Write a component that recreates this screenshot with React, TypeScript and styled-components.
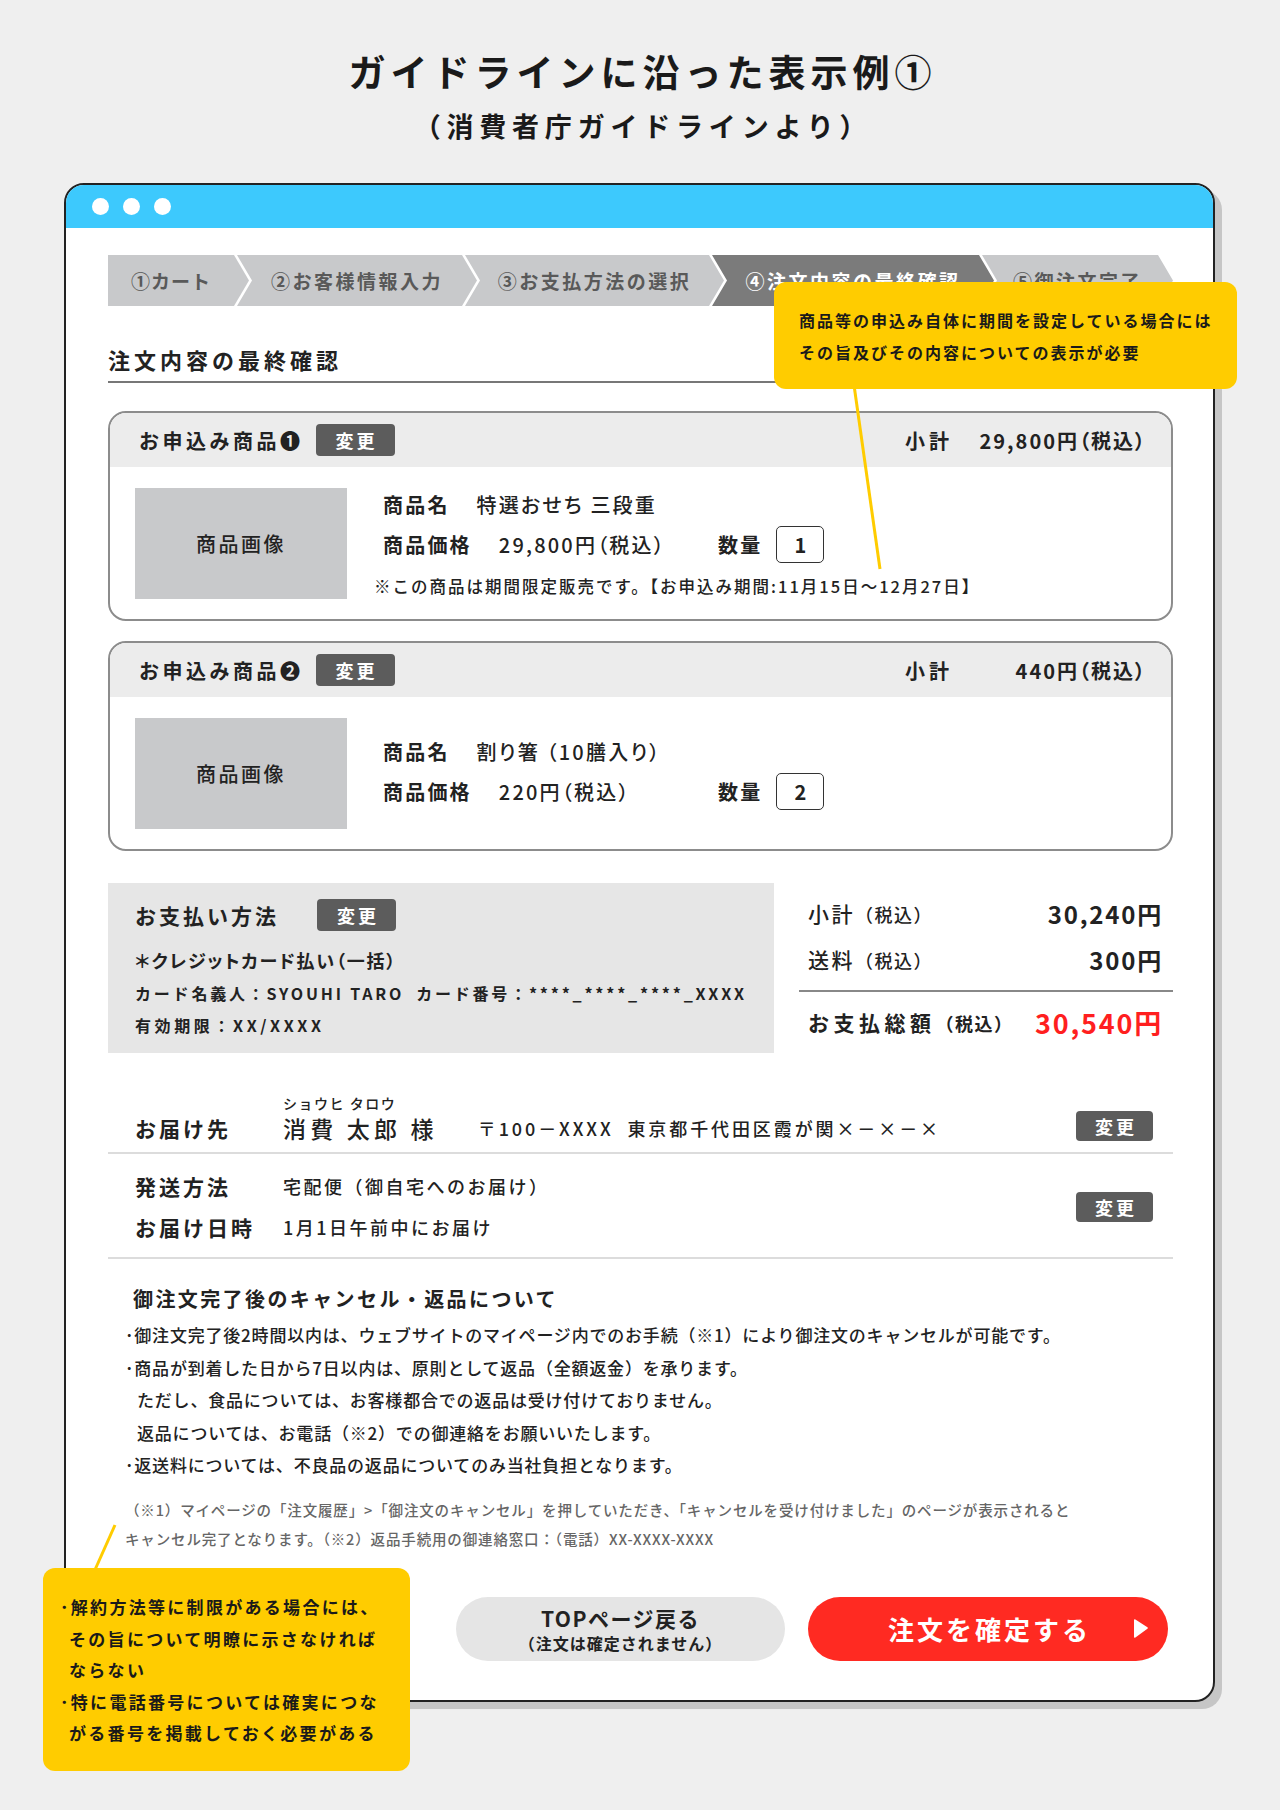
import styled, { createGlobalStyle } from "styled-components";

const GlobalStyle = createGlobalStyle`
  * {
    box-sizing: border-box;
  }
  body {
    margin: 0;
    background: #efefef;
    font-family: "Noto Sans CJK JP", "Noto Sans", sans-serif;
    color: #222;
  }
`;

const Page = styled.div`
  position: relative;
  width: 1280px;
  min-height: 1810px;
  padding-top: 46px;
`;

const Title = styled.h1`
  margin: 0;
  padding-left: 5px;
  text-align: center;
  font-size: 37px;
  line-height: 50px;
  font-weight: 700;
  letter-spacing: 5px;
  color: #1a1a1a;
`;

const SubTitle = styled.h2`
  margin: 10px 0 0;
  padding-left: 6px;
  text-align: center;
  font-size: 27px;
  line-height: 40px;
  font-weight: 700;
  letter-spacing: 5.8px;
  color: #1a1a1a;
`;

const Window = styled.div`
  margin: 37px 0 0 64px;
  width: 1151px;
  background: #fff;
  border: 2px solid #222;
  border-radius: 20px;
  box-shadow: 7px 7px 0 #c6c6c6;
`;

const TitleBar = styled.div`
  display: flex;
  align-items: center;
  gap: 14px;
  height: 43px;
  padding-left: 26px;
  background: #3dc9fd;
  border-radius: 18px 18px 0 0;
`;

const Dot = styled.span`
  width: 17px;
  height: 17px;
  border-radius: 50%;
  background: #fff;
`;

const WindowBody = styled.div`
  padding: 27px 40px 39px 42px;
`;

const Steps = styled.div`
  display: flex;
  height: 51px;
`;

const Step = styled.div<{ $active?: boolean; $first?: boolean; $w?: number }>`
  display: flex;
  align-items: center;
  justify-content: center;
  height: 100%;
  flex: ${(p) => (p.$w ? `0 0 ${p.$w}px` : "1 1 auto")};
  margin-left: ${(p) => (p.$first ? "0" : "-12px")};
  padding: 0 15px 0 ${(p) => (p.$first ? "0" : "15px")};
  background: ${(p) => (p.$active ? "#7b7b7b" : "#c8c9cb")};
  color: ${(p) => (p.$active ? "#fff" : "#595959")};
  font-size: 19px;
  font-weight: 700;
  letter-spacing: ${(p) => (p.$first ? "1px" : "2.5px")};
  white-space: nowrap;
  clip-path: ${(p) =>
    p.$first
      ? "polygon(0 0, calc(100% - 15px) 0, 100% 50%, calc(100% - 15px) 100%, 0 100%)"
      : "polygon(0 0, calc(100% - 15px) 0, 100% 50%, calc(100% - 15px) 100%, 0 100%, 15px 50%)"};
`;

const PageHeading = styled.h3`
  margin: 38px 0 0;
  padding-bottom: 7px;
  border-bottom: 2px solid #777;
  font-size: 22px;
  line-height: 30px;
  font-weight: 700;
  letter-spacing: 4px;
`;

const Card = styled.section`
  margin-top: 28px;
  border: 2px solid #8c8c8c;
  border-radius: 18px;
  overflow: hidden;

  & + & {
    margin-top: 20px;
  }
`;

const CardHeader = styled.div`
  display: flex;
  align-items: center;
  height: 54px;
  padding: 0 24px 0 29px;
  background: #ececec;
`;

const ItemTitle = styled.span`
  font-size: 20px;
  font-weight: 700;
  letter-spacing: 3.5px;
  margin-right: 12px;
`;

const ChangeButton = styled.span<{ $small?: boolean }>`
  display: inline-flex;
  align-items: center;
  justify-content: center;
  flex: none;
  width: ${(p) => (p.$small ? "77px" : "79px")};
  height: ${(p) => (p.$small ? "30px" : "32px")};
  padding-left: 3px;
  border-radius: 4px;
  background: #5c5c5c;
  color: #fff;
  font-size: 18px;
  font-weight: 700;
  letter-spacing: 3px;
`;

const Subtotal = styled.div`
  display: flex;
  align-items: center;
  margin-left: auto;
  font-size: 20px;
  font-weight: 700;
`;

const SubtotalLabel = styled.span`
  width: 66px;
  letter-spacing: 4px;
`;

const SubtotalValue = styled.span`
  width: 176px;
  text-align: right;
  letter-spacing: 2px;
  font-feature-settings: "palt";
`;

const CardBody = styled.div`
  display: flex;
  gap: 36px;
  padding: 21px 24px 20px 25px;
`;

const ImageBox = styled.div`
  display: flex;
  align-items: center;
  justify-content: center;
  flex: none;
  width: 212px;
  height: 111px;
  background: #c8c9cb;
  font-size: 20px;
  font-weight: 500;
  letter-spacing: 2.5px;
`;

const ItemInfo = styled.div`
  display: flex;
  flex-direction: column;
  justify-content: center;
  gap: 6px;
`;

const InfoRow = styled.div`
  display: flex;
  align-items: center;
  line-height: 30px;
`;

const InfoLabel = styled.span`
  margin-right: 27px;
  font-size: 20px;
  font-weight: 700;
  letter-spacing: 2.2px;
`;

const InfoValue = styled.span`
  font-size: 20px;
  font-weight: 500;
  letter-spacing: 2.2px;
  font-feature-settings: "palt";
`;

const PriceCell = styled.div`
  display: flex;
  align-items: center;
  width: 335px;
`;

const QtyLabel = styled(InfoLabel)`
  margin-right: 14px;
`;

const QtyBox = styled.span`
  display: inline-flex;
  align-items: center;
  justify-content: center;
  width: 48px;
  height: 37px;
  border: 1.5px solid #333;
  border-radius: 5px;
  font-size: 20px;
  font-weight: 700;
`;

const Note = styled.p`
  margin: 6px 0 0 -9px;
  font-size: 16.5px;
  line-height: 22px;
  font-weight: 500;
  letter-spacing: 2px;
`;

const PaymentGrid = styled.div`
  display: grid;
  grid-template-columns: 666px 1fr;
  gap: 25px;
  margin-top: 32px;
`;

const PayBox = styled.div`
  padding: 16px 20px 15px 27px;
  background: #e6e6e6;
`;

const PayHead = styled.div`
  display: flex;
  align-items: center;
  gap: 38px;
  font-size: 21px;
  font-weight: 700;
  letter-spacing: 3px;
`;

const PayMethod = styled.div`
  margin-top: 15px;
  font-size: 18px;
  line-height: 28px;
  font-weight: 700;
  letter-spacing: 1.8px;
  font-feature-settings: "palt";
`;

const PayDetail = styled.div<{ $spacing: number }>`
  margin-top: 6px;
  font-size: 16px;
  line-height: 26px;
  font-weight: 700;
  letter-spacing: ${(p) => p.$spacing}px;
  white-space: nowrap;
`;

const Gap = styled.span`
  margin-left: 12px;
`;

const Totals = styled.div`
  padding: 13px 10px 0 9px;
`;

const TotalRow = styled.div`
  display: flex;
  align-items: center;
  justify-content: space-between;
  height: 34px;

  & + & {
    margin-top: 12px;
  }
`;

const TotalLabel = styled.span<{ $strong?: boolean }>`
  font-size: 21px;
  font-weight: ${(p) => (p.$strong ? 700 : 500)};
  letter-spacing: ${(p) => (p.$strong ? "4.5px" : "2.5px")};
`;

const TaxNote = styled.span`
  font-size: 18px;
  letter-spacing: 1.5px;
`;

const TotalValue = styled.span<{ $grand?: boolean }>`
  font-size: ${(p) => (p.$grand ? "27px" : "24px")};
  font-weight: 700;
  letter-spacing: 1.8px;
  color: ${(p) => (p.$grand ? "#ff1f1f" : "#222")};
`;

const Divider = styled.div`
  height: 2px;
  margin: 14px -10px 13px -9px;
  background: #888;
`;

const DeliverySection = styled.div`
  margin-top: 41px;
`;

const AddressRow = styled.div`
  display: flex;
  align-items: flex-end;
  padding: 0 20px 8px 27px;
  border-bottom: 2px solid #dcdcdc;
`;

const RowLabel = styled.span`
  flex: none;
  width: 148px;
  font-size: 21px;
  line-height: 32px;
  font-weight: 700;
  letter-spacing: 3px;
`;

const NameBlock = styled.div`
  display: flex;
  flex-direction: column;
`;

const Furigana = styled.span`
  font-size: 14px;
  line-height: 18px;
  font-weight: 500;
  letter-spacing: 1.5px;
`;

const Name = styled.span`
  font-size: 23px;
  line-height: 32px;
  font-weight: 500;
  letter-spacing: 4.2px;
  white-space: pre;
`;

const Address = styled.span`
  margin-left: 40px;
  font-size: 18px;
  line-height: 32px;
  font-weight: 500;
  letter-spacing: 2.9px;
  white-space: pre;
`;

const PushRight = styled.div<{ $bottom?: number }>`
  margin-left: auto;
  margin-bottom: ${(p) => p.$bottom ?? 0}px;
`;

const ShippingRow = styled.div`
  display: flex;
  align-items: center;
  padding: 16px 20px 14px 27px;
  border-bottom: 2px solid #dcdcdc;
`;

const ShippingLines = styled.div`
  display: flex;
  flex-direction: column;
  gap: 9px;
`;

const ShippingLine = styled.div`
  display: flex;
  align-items: center;
`;

const ShippingValue = styled.span`
  font-size: 18px;
  line-height: 32px;
  font-weight: 500;
  letter-spacing: 2.5px;
`;

const CancelSection = styled.div`
  padding: 25px 0 0 17px;
`;

const CancelTitle = styled.h4`
  margin: 0 0 0 8px;
  font-size: 20px;
  line-height: 30px;
  font-weight: 700;
  letter-spacing: 2.4px;
`;

const BulletList = styled.div`
  margin-top: 5px;
  font-size: 17px;
  line-height: 32.5px;
  font-weight: 500;
  letter-spacing: 0.8px;
`;

const BulletLine = styled.div<{ $indent?: boolean }>`
  padding-left: ${(p) => (p.$indent ? "12px" : "0")};
`;

const Footnote = styled.div`
  margin-top: 13px;
  font-size: 14.5px;
  line-height: 29px;
  font-weight: 500;
  letter-spacing: 0.85px;
  color: #666;
`;

const ButtonRow = styled.div`
  display: flex;
  justify-content: flex-end;
  gap: 23px;
  margin-top: 44px;
  padding-right: 5px;
`;

const BackButton = styled.div`
  display: flex;
  flex-direction: column;
  align-items: center;
  justify-content: center;
  width: 329px;
  height: 64px;
  border-radius: 32px;
  background: #e5e5e5;
  font-weight: 700;
`;

const BackMain = styled.span`
  font-size: 21px;
  line-height: 28px;
  letter-spacing: 1.5px;
`;

const BackSub = styled.span`
  font-size: 16px;
  line-height: 22px;
  letter-spacing: 1px;
`;

const ConfirmButton = styled.div`
  display: grid;
  grid-template-columns: 1fr auto 1fr;
  align-items: center;
  width: 360px;
  height: 64px;
  border-radius: 32px;
  background: #ff2a22;
  color: #fff;
  font-size: 26px;
  font-weight: 700;
  letter-spacing: 3px;
`;

const ConfirmText = styled.span`
  grid-column: 2;
  padding-left: 3px;
`;

const ArrowWrap = styled.span`
  display: flex;
  justify-self: end;
  padding-right: 19px;
`;

const Callout = styled.div<{ $size?: number; $spacing?: number }>`
  position: absolute;
  background: #ffcc00;
  border-radius: 12px;
  font-size: ${(p) => p.$size ?? 16}px;
  font-weight: 700;
  letter-spacing: ${(p) => p.$spacing ?? 2}px;
  color: #1a1a1a;
  white-space: nowrap;
`;

const TopCallout = styled(Callout)`
  left: 774px;
  top: 282px;
  width: 463px;
  height: 107px;
  padding: 22px 0 0 25px;
  line-height: 32px;
`;

const BottomCallout = styled(Callout)`
  left: 43px;
  top: 1568px;
  width: 367px;
  height: 203px;
  padding: 23px 0 0 26px;
  line-height: 31.5px;
`;

const CalloutLine = styled.div<{ $bullet?: boolean }>`
  text-indent: ${(p) => (p.$bullet ? "-9px" : "0")};
`;

const Pointers = styled.svg`
  position: absolute;
  left: 0;
  top: 0;
  pointer-events: none;
`;

type Item = {
  no: string;
  subtotal: string;
  name: string;
  price: string;
  qty: number;
  note?: string;
};

const items: Item[] = [
  {
    no: "❶",
    subtotal: "29,800円（税込）",
    name: "特選おせち 三段重",
    price: "29,800円（税込）",
    qty: 1,
    note: "※この商品は期間限定販売です。【お申込み期間:11月15日〜12月27日】",
  },
  {
    no: "❷",
    subtotal: "440円（税込）",
    name: "割り箸 （10膳入り）",
    price: "220円（税込）",
    qty: 2,
  },
];

const steps = [
  { label: "①カート", w: 141 },
  { label: "②お客様情報入力", w: 240 },
  { label: "③お支払方法の選択", w: 259 },
  { label: "④注文内容の最終確認", w: 282, active: true },
  { label: "⑤御注文完了" },
];

function PlayArrow() {
  return (
    <svg width="17" height="21" viewBox="0 0 17 21">
      <path
        d="M2 2.2 Q2 0.6 3.4 1.4 L15.4 9.2 Q16.6 10 15.4 10.8 L3.4 19.6 Q2 20.4 2 18.8 Z"
        fill="#fff"
      />
    </svg>
  );
}

export default function App() {
  return (
    <Page>
      <GlobalStyle />
      <Title>ガイドラインに沿った表示例①</Title>
      <SubTitle>（消費者庁ガイドラインより）</SubTitle>

      <Window>
        <TitleBar>
          <Dot />
          <Dot />
          <Dot />
        </TitleBar>
        <WindowBody>
          <Steps>
            {steps.map((s, i) => (
              <Step key={s.label} $first={i === 0} $active={s.active} $w={s.w}>
                {s.label}
              </Step>
            ))}
          </Steps>

          <PageHeading>注文内容の最終確認</PageHeading>

          {items.map((item) => (
            <Card key={item.no}>
              <CardHeader>
                <ItemTitle>お申込み商品{item.no}</ItemTitle>
                <ChangeButton>変更</ChangeButton>
                <Subtotal>
                  <SubtotalLabel>小計</SubtotalLabel>
                  <SubtotalValue>{item.subtotal}</SubtotalValue>
                </Subtotal>
              </CardHeader>
              <CardBody>
                <ImageBox>商品画像</ImageBox>
                <ItemInfo>
                  <InfoRow>
                    <InfoLabel>商品名</InfoLabel>
                    <InfoValue>{item.name}</InfoValue>
                  </InfoRow>
                  <InfoRow>
                    <PriceCell>
                      <InfoLabel>商品価格</InfoLabel>
                      <InfoValue>{item.price}</InfoValue>
                    </PriceCell>
                    <QtyLabel>数量</QtyLabel>
                    <QtyBox>{item.qty}</QtyBox>
                  </InfoRow>
                  {item.note && <Note>{item.note}</Note>}
                </ItemInfo>
              </CardBody>
            </Card>
          ))}

          <PaymentGrid>
            <PayBox>
              <PayHead>
                お支払い方法
                <ChangeButton>変更</ChangeButton>
              </PayHead>
              <PayMethod>＊クレジットカード払い（一括）</PayMethod>
              <PayDetail $spacing={2.8}>
                カード名義人：SYOUHI TARO<Gap />カード番号：****_****_****_XXXX
              </PayDetail>
              <PayDetail $spacing={3.6}>有効期限：XX/XXXX</PayDetail>
            </PayBox>
            <Totals>
              <TotalRow>
                <TotalLabel>
                  小計<TaxNote>（税込）</TaxNote>
                </TotalLabel>
                <TotalValue>30,240円</TotalValue>
              </TotalRow>
              <TotalRow>
                <TotalLabel>
                  送料<TaxNote>（税込）</TaxNote>
                </TotalLabel>
                <TotalValue>300円</TotalValue>
              </TotalRow>
              <Divider />
              <TotalRow>
                <TotalLabel $strong>
                  お支払総額<TaxNote>（税込）</TaxNote>
                </TotalLabel>
                <TotalValue $grand>30,540円</TotalValue>
              </TotalRow>
            </Totals>
          </PaymentGrid>

          <DeliverySection>
            <AddressRow>
              <RowLabel>お届け先</RowLabel>
              <NameBlock>
                <Furigana>ショウヒ タロウ</Furigana>
                <Name>消費 太郎 様</Name>
              </NameBlock>
              <Address>〒100－XXXX  東京都千代田区霞が関×－×－×</Address>
              <PushRight $bottom={3}>
                <ChangeButton $small>変更</ChangeButton>
              </PushRight>
            </AddressRow>
            <ShippingRow>
              <ShippingLines>
                <ShippingLine>
                  <RowLabel>発送方法</RowLabel>
                  <ShippingValue>宅配便（御自宅へのお届け）</ShippingValue>
                </ShippingLine>
                <ShippingLine>
                  <RowLabel>お届け日時</RowLabel>
                  <ShippingValue>1月1日午前中にお届け</ShippingValue>
                </ShippingLine>
              </ShippingLines>
              <PushRight>
                <ChangeButton $small>変更</ChangeButton>
              </PushRight>
            </ShippingRow>
          </DeliverySection>

          <CancelSection>
            <CancelTitle>御注文完了後のキャンセル・返品について</CancelTitle>
            <BulletList>
              <BulletLine>
                ･御注文完了後2時間以内は、ウェブサイトのマイページ内でのお手続（※1）により御注文のキャンセルが可能です。
              </BulletLine>
              <BulletLine>
                ･商品が到着した日から7日以内は、原則として返品（全額返金）を承ります。
              </BulletLine>
              <BulletLine $indent>
                ただし、食品については、お客様都合での返品は受け付けておりません。
              </BulletLine>
              <BulletLine $indent>
                返品については、お電話（※2）での御連絡をお願いいたします。
              </BulletLine>
              <BulletLine>
                ･返送料については、不良品の返品についてのみ当社負担となります。
              </BulletLine>
            </BulletList>
            <Footnote>
              （※1）マイページの「注文履歴」&gt;「御注文のキャンセル」を押していただき、「キャンセルを受け付けました」のページが表示されると
              <br />
              キャンセル完了となります。（※2）返品手続用の御連絡窓口：（電話）XX-XXXX-XXXX
            </Footnote>
          </CancelSection>

          <ButtonRow>
            <BackButton>
              <BackMain>TOPページ戻る</BackMain>
              <BackSub>（注文は確定されません）</BackSub>
            </BackButton>
            <ConfirmButton>
              <ConfirmText>注文を確定する</ConfirmText>
              <ArrowWrap>
                <PlayArrow />
              </ArrowWrap>
            </ConfirmButton>
          </ButtonRow>
        </WindowBody>
      </Window>

      <Pointers width="1280" height="1810" viewBox="0 0 1280 1810">
        <line x1="854" y1="385" x2="880" y2="569" stroke="#ffcc00" strokeWidth="3" />
        <line x1="115" y1="1525" x2="94" y2="1572" stroke="#ffcc00" strokeWidth="3" />
      </Pointers>

      <TopCallout>
        <div>商品等の申込み自体に期間を設定している場合には</div>
        <div>その旨及びその内容についての表示が必要</div>
      </TopCallout>

      <BottomCallout $size={17} $spacing={2.3}>
        <CalloutLine $bullet>･解約方法等に制限がある場合には、</CalloutLine>
        <CalloutLine>その旨について明瞭に示さなければ</CalloutLine>
        <CalloutLine>ならない</CalloutLine>
        <CalloutLine $bullet>･特に電話番号については確実につな</CalloutLine>
        <CalloutLine>がる番号を掲載しておく必要がある</CalloutLine>
      </BottomCallout>
    </Page>
  );
}
